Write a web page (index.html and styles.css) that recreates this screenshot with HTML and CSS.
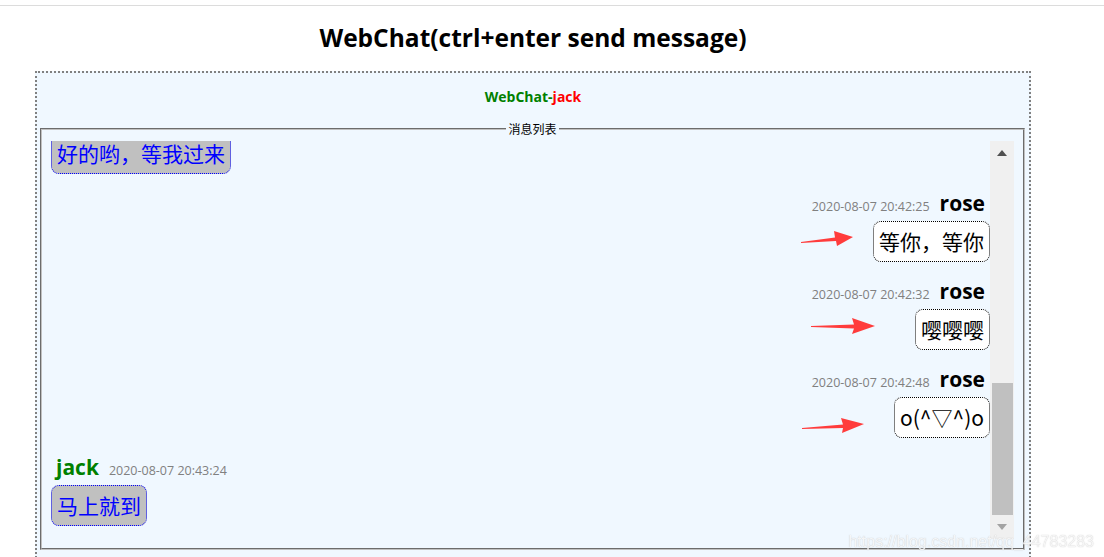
FILE: index.html
```html
<!DOCTYPE html>
<html lang="zh-CN">
<head>
	<meta charset="UTF-8">
	<meta name="viewport" content="width=device-width, initial-scale=1.0">
	<title>WebChat</title>
	<link rel="stylesheet" href="styles.css">
</head>
<body>
	<div class="topline"></div>
	<div class="page">
		<h2 class="title">WebChat(ctrl+enter send message)</h2>
		<div class="chat">
			<div class="chat-head"><span class="brand">WebChat-</span><span class="me">jack</span></div>
			<fieldset class="box">
				<legend>消息列表</legend>
				<div class="box-body">
					<div class="msg-list">
						<div class="msg self">
							<div class="info"><span class="name">jack</span><span class="time">2020-08-07 20:42:10</span></div>
							<div class="row"><div class="bubble">好的哟，等我过来</div></div>
						</div>
						<div class="msg other">
							<div class="info"><span class="time">2020-08-07 20:42:25</span><span class="name">rose</span></div>
							<div class="row">
								<svg class="mark" width="52" height="17" viewBox="0 0 52 17"><polygon points="0,12 34,7.5 33,1 52,7 36,16 35,11 0,13" /></svg>
								<div class="bubble">等你，等你</div>
							</div>
						</div>
						<div class="msg other">
							<div class="info"><span class="time">2020-08-07 20:42:32</span><span class="name">rose</span></div>
							<div class="row">
								<svg class="mark mark-wide" width="64" height="17" viewBox="0 0 64 17"><polygon points="0,8 43,6.5 41,0 64,8 41,16 43,10.5 0,9" /></svg>
								<div class="bubble">嘤嘤嘤</div>
							</div>
						</div>
						<div class="msg other">
							<div class="info"><span class="time">2020-08-07 20:42:48</span><span class="name">rose</span></div>
							<div class="row">
								<svg class="mark mark-mid" width="62" height="17" viewBox="0 0 62 17"><polygon points="0,11 41,7.5 39,1 62,7 40,16 41,11 0,12" /></svg>
								<div class="bubble">o(^▽^)o</div>
							</div>
						</div>
						<div class="msg self">
							<div class="info"><span class="name">jack</span><span class="time">2020-08-07 20:43:24</span></div>
							<div class="row"><div class="bubble">马上就到</div></div>
						</div>
					</div>
					<div class="scrollbar">
						<div class="sb-btn"><span class="tri-up"></span></div>
						<div class="sb-track"><div class="sb-thumb"></div></div>
						<div class="sb-btn"><span class="tri-down"></span></div>
					</div>
				</div>
			</fieldset>
		</div>
	</div>
	<div class="watermark">https://blog.csdn.net/qq_44783283</div>
</body>
</html>
```

FILE: styles.css
```css
html, body { padding: 0; margin: 0; background-color: #fff; overflow: hidden; }
body { font-family: "Open Sans", "Noto Sans CJK SC", sans-serif; color: #000; }

.topline { height: 5px; border-bottom: 1px solid #dcdcdc; }

.page { width: 996px; margin-left: 35px; }

.title {
	margin: 16px 0 17px 0;
	font-size: 24.5px;
	line-height: 32px;
	font-weight: bold;
	text-align: center;
}

.chat {
	border: 2px dotted #808080;
	background-color: #f0f8ff;
	padding: 14px 0 30px 0;
}
.chat-head {
	text-align: center;
	font-size: 14px;
	line-height: 20px;
	font-weight: bold;
}
.chat-head .brand { color: #008000; }
.chat-head .me { color: #ff0000; }

.box {
	margin: 14px 4px 0 3px;
	padding: 4px 9px 9px 9px;
	border: 2px groove #c0c0c0;
	min-width: 0;
}
.box legend {
	margin: 0 auto;
	padding: 0 2px;
	font-size: 12px;
	line-height: 16px;
	font-family: "Noto Sans CJK SC", sans-serif;
}

.box-body { display: flex; height: 398px; }

.msg-list {
	flex: 1;
	overflow: hidden;
	display: flex;
	flex-direction: column;
	justify-content: flex-end;
	padding-bottom: 13px;
}

.scrollbar {
	width: 24px;
	display: flex;
	flex-direction: column;
	background-color: #f0f0f0;
}
.sb-btn { height: 24px; display: flex; justify-content: center; align-items: center; }
.tri-up { border-left: 5px solid transparent; border-right: 5px solid transparent; border-bottom: 6px solid #505050; }
.tri-down { border-left: 5px solid transparent; border-right: 5px solid transparent; border-top: 6px solid #a3a3a3; }
.sb-track { flex: 1; display: flex; flex-direction: column; justify-content: flex-end; padding: 0 1px 0 2px; }
.sb-thumb { height: 132px; background-color: #c0c0c0; }

.msg { margin-top: 17px; flex-shrink: 0; }
.msg .info {
	display: flex;
	align-items: baseline;
	height: 24px;
	line-height: 24px;
}
.msg .name { font-size: 21px; font-weight: bold; margin: 0 5px; }
.msg .time { font-size: 12.5px; color: #808080; margin: 0 5px; }
.msg .row { display: flex; align-items: center; margin-top: 6px; }
.msg .bubble {
	font-size: 21px;
	line-height: 29px;
	padding: 5px 5px;
	border-radius: 8px;
	font-family: "Noto Sans CJK SC", sans-serif;
}

.msg.self .name { color: #008000; }
.msg.self .bubble { background-color: #c0c0c0; color: #0000ff; border: 1px dotted #0000ff; }

.msg.other .info, .msg.other .row { justify-content: flex-end; }
.msg.other .name { color: #000; }
.msg.other .bubble { background-color: #fff; color: #000; border: 1px dotted #000; }

.mark { fill: #ff3c3c; margin-right: 20px; margin-top: -7px; }
.mark-wide { margin-right: 40px; margin-top: -6px; }
.mark-mid { margin-right: 30px; margin-top: 16px; }

.watermark {
	position: fixed;
	right: 10px;
	bottom: 5px;
	font-family: "Liberation Sans", sans-serif;
	font-size: 16px;
	line-height: 20px;
	color: rgba(255, 255, 255, 0.85);
	text-shadow: 0 0 1px rgba(120, 120, 120, 0.5);
}
```
